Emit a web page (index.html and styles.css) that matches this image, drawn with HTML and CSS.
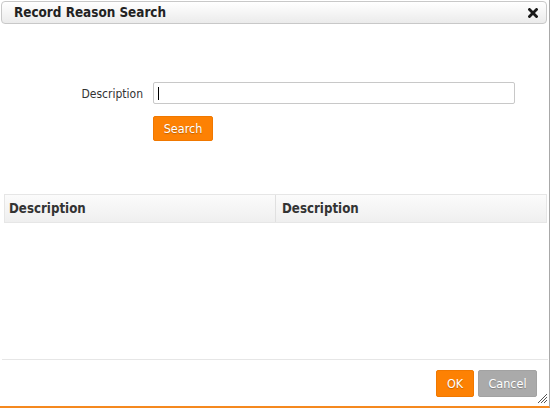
FILE: index.html
```html
<!DOCTYPE html>
<html>
<head>
<meta charset="utf-8">
<link rel="stylesheet" href="styles.css">
</head>
<body>
<div class="dialog">
  <div class="titlebar">
    <span class="title">Record Reason Search</span>
    <span class="close"><svg width="10" height="10" viewBox="0 0 10 10"><path d="M1.5 1.5 L8.5 8.5 M8.5 1.5 L1.5 8.5" stroke="#1a1a1a" stroke-width="2.8" stroke-linecap="square"/></svg></span>
  </div>
  <div class="form">
    <label class="label">Description</label>
    <div class="input"><span class="caret"></span></div>
    <span></span>
    <div><button class="btn btn-orange btn-search">Search</button></div>
  </div>
  <div class="grid">
    <div class="grid-head">
      <div class="col col1">Description</div>
      <div class="col col2">Description</div>
    </div>
    <div class="grid-body"></div>
  </div>
  <div class="footer">
    <button class="btn btn-orange btn-ok">OK</button>
    <button class="btn btn-grey btn-cancel">Cancel</button>
  </div>
  <svg class="grip" width="11" height="11" viewBox="0 0 11 11"><path d="M10 1 L1 10 M10 4 L4 10 M10 7 L7 10" stroke="#555" stroke-width="1"/></svg>
</div>
</body>
</html>
```
FILE: styles.css
```css
html, body {
  margin: 0;
  padding: 0;
  background: #fff;
}
body {
  font-family: "DejaVu Sans Condensed", "DejaVu Sans", sans-serif;
  font-stretch: condensed;
  color: #333;
}
.dialog {
  position: relative;
  width: 549px;
  height: 406px;
  border-right: 1px solid #a8a8a8;
  border-bottom: 2px solid #f5891f;
  display: flex;
  flex-direction: column;
}
.titlebar {
  margin: 1px 0 0 1px;
  width: 546px;
  height: 23px;
  border: 1px solid #c8c8c8;
  border-radius: 4px;
  background: linear-gradient(#ffffff, #ebebeb);
  display: flex;
  align-items: center;
  justify-content: space-between;
  padding: 0 8px 0 12px;
  box-sizing: border-box;
}
.title {
  font-weight: bold;
  font-size: 13.4px;
  color: #222;
}
.close {
  display: flex;
  margin-top: 1px;
}
.form {
  display: grid;
  grid-template-columns: 143px 362px;
  column-gap: 10px;
  row-gap: 12px;
  margin-top: 58px;
  align-items: center;
}
.label {
  text-align: right;
  font-size: 12px;
  color: #333;
  padding-top: 2px;
}
.input {
  height: 22px;
  border: 1px solid #c8c8c8;
  border-radius: 2px;
  box-sizing: border-box;
  display: flex;
  align-items: center;
  padding-left: 4px;
}
.caret {
  width: 1px;
  height: 13px;
  background: #000;
}
.btn {
  font-family: inherit;
  font-stretch: condensed;
  font-size: 12.5px;
  color: #fff;
  border: none;
  border-radius: 2px;
  padding: 0;
  text-shadow: 0 1px 1px rgba(0,0,0,0.25);
  cursor: pointer;
}
.btn-orange {
  background: #fd8103;
  border: 1px solid #f07800;
}
.btn-grey {
  background: #aaaaaa;
  border: 1px solid #a2a2a2;
}
.btn-search {
  width: 60px;
  height: 25px;
  display: block;
}
.grid {
  margin: 53px 2px 0 4px;
  flex: 1;
  display: flex;
  flex-direction: column;
}
.grid-head {
  display: grid;
  grid-template-columns: 271px 1fr;
  height: 29px;
  border: 1px solid #e6e6e6;
  box-sizing: border-box;
  background: linear-gradient(#fbfbfb, #efefef);
}
.col {
  font-weight: bold;
  font-size: 13.2px;
  color: #333;
  display: flex;
  align-items: center;
  padding-left: 4px;
}
.col1 {
  border-right: 1px solid #e0e0e0;
}
.col2 {
  padding-left: 6px;
}
.grid-body {
  flex: 1;
}
.footer {
  margin: 0 1px 0 2px;
  border-top: 1px solid #e6e6e6;
  height: 47px;
  box-sizing: border-box;
  display: flex;
  justify-content: flex-end;
  align-items: flex-start;
  gap: 4px;
  padding: 10px 11px 0 0;
}
.btn-ok {
  width: 38px;
  height: 27px;
}
.btn-cancel {
  width: 59px;
  height: 27px;
}
.grip {
  position: absolute;
  right: 1px;
  bottom: 2px;
}
```
